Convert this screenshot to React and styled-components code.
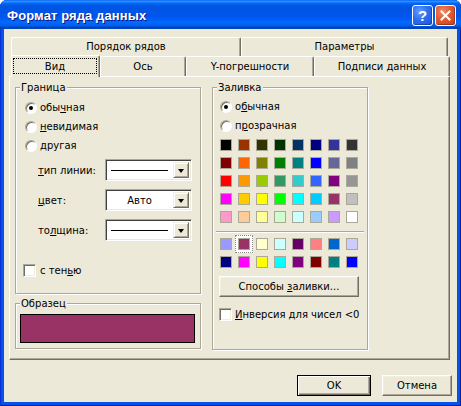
import styled, { createGlobalStyle } from "styled-components";

const GlobalStyle = createGlobalStyle`
  html, body {
    margin: 0;
    padding: 0;
    background: #ffffff;
  }
  body {
    font-family: "DejaVu Sans", Verdana, sans-serif;
    font-size: 10px;
    color: #000;
  }
  u {
    text-decoration-thickness: 1px;
    text-underline-offset: 1px;
  }
`;

const basicColors = [
  "#000000", "#993300", "#333300", "#003300", "#003366", "#000080", "#333399", "#333333",
  "#800000", "#FF6600", "#808000", "#008000", "#008080", "#0000FF", "#666699", "#808080",
  "#FF0000", "#FF9900", "#99CC00", "#339966", "#33CCCC", "#3366FF", "#800080", "#969696",
  "#FF00FF", "#FFCC00", "#FFFF00", "#00FF00", "#00FFFF", "#00CCFF", "#993366", "#C0C0C0",
  "#FF99CC", "#FFCC99", "#FFFF99", "#CCFFCC", "#CCFFFF", "#99CCFF", "#CC99FF", "#FFFFFF",
];

const chartColors = [
  "#9999FF", "#993366", "#FFFFCC", "#CCFFFF", "#660066", "#FF8080", "#0066CC", "#CCCCFF",
  "#000080", "#FF00FF", "#FFFF00", "#00FFFF", "#800080", "#800000", "#008080", "#0000FF",
];

const Window = styled.div`
  width: 461px;
  height: 406px;
  box-sizing: border-box;
  display: flex;
  flex-direction: column;
  background: #0553e4;
  border-radius: 7px 7px 0 0;
  box-shadow: inset 1px 0 #0831d9, inset -1px 0 #001ea0, inset 0 -1px #001ea0;
  overflow: hidden;
`;

const TitleBar = styled.div`
  height: 29px;
  flex: none;
  display: flex;
  align-items: center;
  padding: 2px 5px 0 7px;
  box-sizing: border-box;
  background: linear-gradient(
    to bottom,
    #0058ee 0%,
    #3593ff 4%,
    #288eff 6%,
    #127dff 8%,
    #036ffc 10%,
    #0262ee 14%,
    #0057e5 20%,
    #0054e3 24%,
    #0055eb 56%,
    #005bf5 66%,
    #026afe 76%,
    #0062ef 86%,
    #0052d6 92%,
    #0040ab 94%,
    #0046c0 100%
  );
`;

const Title = styled.span`
  flex: 1;
  color: #fff;
  font-family: "Liberation Sans", Arial, sans-serif;
  font-weight: bold;
  font-size: 13px;
  text-shadow: 1px 1px #0a1883;
  letter-spacing: 0.1px;
`;

const CaptionButtons = styled.div`
  display: flex;
  gap: 2px;
  margin-top: -1px;
`;

const CaptionButton = styled.div`
  width: 21px;
  height: 21px;
  box-sizing: border-box;
  border: 1px solid #fff;
  border-radius: 3px;
  display: flex;
  align-items: center;
  justify-content: center;
  color: #fff;
  font-family: "Liberation Sans", Arial, sans-serif;
  font-weight: bold;
  font-size: 15px;
  background: ${(p) =>
    p.$close
      ? "radial-gradient(circle at 35% 30%, #f08a6a 0%, #e05a30 45%, #c4401c 100%)"
      : "radial-gradient(circle at 35% 30%, #6a9cff 0%, #2d6ff0 45%, #1a56d8 100%)"};
  box-shadow: inset -1px -1px rgba(0, 0, 0, 0.25);
`;

const Content = styled.div`
  flex: 1;
  margin: 0 4px 4px 4px;
  background: #ece9d8;
  padding: 8px 5px 0 5px;
  display: flex;
  flex-direction: column;
`;

const TabArea = styled.div`
  margin-right: 2px;
  display: flex;
  flex-direction: column;
`;

const TabRow = styled.div`
  display: flex;
  align-items: flex-end;
  height: ${(p) => p.$h}px;
  margin-left: 2px;
`;

const Tab = styled.div`
  position: relative;
  width: ${(p) => p.$w}px;
  height: ${(p) => (p.$active ? p.$h + 2 : p.$h)}px;
  margin-bottom: ${(p) => (p.$active ? -1 : 0)}px;
  z-index: ${(p) => (p.$active ? 1 : 0)};
  box-sizing: border-box;
  display: flex;
  align-items: center;
  justify-content: center;
  background: #ece9d8;
  border-top: 1px solid #fff;
  border-left: 1px solid #fff;
  border-right: 1px solid #716f64;
  border-radius: 2px 2px 0 0;
  box-shadow: inset -1px 0 #aca899;
  padding: ${(p) => (p.$active ? "2px 2px 3px 1px" : "0 0 1px")};
`;

const FocusRect = styled.span`
  flex: 1;
  align-self: stretch;
  display: flex;
  align-items: center;
  justify-content: center;
  border: 1px dotted #000;
`;

const Panel = styled.div`
  height: 284px;
  box-sizing: border-box;
  border-top: 1px solid #fff;
  border-left: 1px solid #fff;
  border-right: 1px solid #716f64;
  border-bottom: 1px solid #716f64;
  box-shadow: inset -1px -1px #aca899;
  display: flex;
  gap: 11px;
  padding: 10px 0 0 5px;
`;

const Column = styled.div`
  width: ${(p) => p.$w}px;
  display: flex;
  flex-direction: column;
  gap: 9px;
`;

const Group = styled.div`
  position: relative;
  height: ${(p) => (p.$h ? `${p.$h}px` : "auto")};
  box-sizing: border-box;
  border: 1px solid #aca899;
  box-shadow: inset 1px 1px #fff, 1px 1px #fff;
  padding: ${(p) => p.$pad || "0"};
  display: flex;
  flex-direction: column;
`;

const GroupLabel = styled.span`
  position: absolute;
  top: -7px;
  left: 4px;
  padding: 0 1px;
  line-height: 13px;
  background: #ece9d8;
`;

const OptionRow = styled.div`
  display: flex;
  align-items: center;
  height: 19px;
  padding-left: ${(p) => p.$indent}px;
  gap: 3px;
`;

const Radio = styled.span`
  position: relative;
  width: 12px;
  height: 12px;
  box-sizing: border-box;
  border-radius: 50%;
  background: #fff;
  border: 1px solid;
  border-color: #aca899 #fff #fff #aca899;
  box-shadow: inset 1px 1px #716f64;

  &::after {
    content: "";
    display: ${(p) => (p.$checked ? "block" : "none")};
    position: absolute;
    left: 3px;
    top: 3px;
    width: 4px;
    height: 4px;
    border-radius: 50%;
    background: #000;
  }
`;

const Checkbox = styled.span`
  width: 13px;
  height: 13px;
  box-sizing: border-box;
  background: #fff;
  border: 1px solid;
  border-color: #aca899 #fff #fff #aca899;
  box-shadow: inset 1px 1px #716f64, inset -1px -1px #f1efe2;
`;

const CheckRow = styled.div`
  display: flex;
  align-items: center;
  gap: ${(p) => p.$gap}px;
  padding-left: ${(p) => p.$indent}px;
  margin-top: ${(p) => p.$top}px;
`;

const Fields = styled.div`
  display: flex;
  flex-direction: column;
  gap: 8px;
  margin-top: 4px;
`;

const FieldRow = styled.div`
  display: flex;
  align-items: center;
  height: 22px;
  padding-left: 22px;
`;

const FieldLabel = styled.span`
  width: 67px;
`;

const Combo = styled.div`
  width: 87px;
  height: 22px;
  box-sizing: border-box;
  display: flex;
  align-items: stretch;
  background: #fff;
  border: 1px solid;
  border-color: #aca899 #fff #fff #aca899;
  box-shadow: inset 1px 1px #404040, inset -1px -1px #ece9d8;
  padding: 2px;
`;

const ComboValue = styled.div`
  flex: 1;
  display: flex;
  align-items: center;
  justify-content: center;
  padding-right: 2px;
`;

const LineSample = styled.span`
  width: 57px;
  height: 1px;
  background: #000;
`;

const ComboButton = styled.div`
  width: 16px;
  box-sizing: border-box;
  display: flex;
  align-items: center;
  justify-content: center;
  background: #ece9d8;
  border: 1px solid;
  border-color: #f1efe2 #716f64 #716f64 #f1efe2;
  box-shadow: inset 1px 1px #fff, inset -1px -1px #aca899;

  &::after {
    content: "";
    width: 0;
    height: 0;
    border-left: 3.5px solid transparent;
    border-right: 3.5px solid transparent;
    border-top: 4px solid #000;
    margin-top: 1px;
  }
`;

const Palette = styled.div`
  display: grid;
  grid-template-columns: repeat(8, 12px);
  gap: 6px;
  padding-left: 7px;
  margin-top: ${(p) => p.$top}px;
`;

const Swatch = styled.span`
  width: 12px;
  height: 12px;
  box-sizing: border-box;
  border: 1px solid #aca899;
  background: ${(p) => p.$color};
  ${(p) =>
    p.$selected &&
    `
    outline: 1px dotted #8a8a8a;
    outline-offset: 2px;
    box-shadow: 0 0 0 3px #fff;
  `}
`;

const Separator = styled.div`
  height: 1px;
  margin: 8px 3px 0;
  background: #aca899;
  box-shadow: 0 1px #fff;
`;

const Button = styled.div`
  width: ${(p) => p.$w}px;
  height: ${(p) => p.$h || 21}px;
  box-sizing: border-box;
  display: flex;
  align-items: center;
  justify-content: center;
  background: #ece9d8;
  border: 1px solid;
  border-color: ${(p) =>
    p.$default ? "#000" : "#fff #716f64 #716f64 #fff"};
  box-shadow: ${(p) =>
    p.$default
      ? "inset 1px 1px #fff, inset -1px -1px #716f64, inset -2px -2px #aca899"
      : "inset -1px -1px #aca899, inset 1px 1px #f1efe2"};
  margin-left: ${(p) => p.$left || 0}px;
  margin-top: ${(p) => p.$top || 0}px;
`;

const SamplePreview = styled.div`
  height: 29px;
  box-sizing: border-box;
  background: #993366;
  border: 1px solid #000;
`;

const Footer = styled.div`
  display: flex;
  justify-content: flex-end;
  gap: 11px;
  padding-top: 15px;
`;

function CloseGlyph() {
  return (
    <svg width="11" height="11" viewBox="0 0 11 11">
      <path d="M1.5 1.5 L9.5 9.5 M9.5 1.5 L1.5 9.5" stroke="#fff" strokeWidth="2" strokeLinecap="square" />
    </svg>
  );
}

export default function App() {
  return (
    <>
      <GlobalStyle />
      <Window>
        <TitleBar>
          <Title>Формат ряда данных</Title>
          <CaptionButtons>
            <CaptionButton>?</CaptionButton>
            <CaptionButton $close>
              <CloseGlyph />
            </CaptionButton>
          </CaptionButtons>
        </TitleBar>

        <Content>
          <TabArea>
            <TabRow $h={19}>
              <Tab $w={230} $h={19}>Порядок рядов</Tab>
              <Tab $w={207} $h={19}>Параметры</Tab>
            </TabRow>
            <TabRow $h={20}>
              <Tab $w={89} $h={20} $active>
                <FocusRect>Вид</FocusRect>
              </Tab>
              <Tab $w={86} $h={20}>Ось</Tab>
              <Tab $w={128} $h={20}>Y-погрешности</Tab>
              <Tab $w={136} $h={20}>Подписи данных</Tab>
            </TabRow>

            <Panel>
              <Column $w={186}>
                <Group $h={207} $pad="10px 0 0 0">
                  <GroupLabel>Граница</GroupLabel>
                  <OptionRow $indent={9}>
                    <Radio $checked />
                    <span>
                      обы<u>ч</u>ная
                    </span>
                  </OptionRow>
                  <OptionRow $indent={9}>
                    <Radio />
                    <span>
                      <u>н</u>евидимая
                    </span>
                  </OptionRow>
                  <OptionRow $indent={9}>
                    <Radio />
                    <span>другая</span>
                  </OptionRow>

                  <Fields>
                    <FieldRow>
                      <FieldLabel>
                        <u>т</u>ип линии:
                      </FieldLabel>
                      <Combo>
                        <ComboValue>
                          <LineSample />
                        </ComboValue>
                        <ComboButton />
                      </Combo>
                    </FieldRow>
                    <FieldRow>
                      <FieldLabel>
                        <u>ц</u>вет:
                      </FieldLabel>
                      <Combo>
                        <ComboValue>Авто</ComboValue>
                        <ComboButton />
                      </Combo>
                    </FieldRow>
                    <FieldRow>
                      <FieldLabel>
                        то<u>л</u>щина:
                      </FieldLabel>
                      <Combo>
                        <ComboValue>
                          <LineSample />
                        </ComboValue>
                        <ComboButton />
                      </Combo>
                    </FieldRow>
                  </Fields>

                  <CheckRow $indent={7} $gap={4} $top={23}>
                    <Checkbox />
                    <span>
                      с тен<u>ь</u>ю
                    </span>
                  </CheckRow>
                </Group>

                <Group $pad="10px 5px 5px 4px">
                  <GroupLabel>Образец</GroupLabel>
                  <SamplePreview />
                </Group>
              </Column>

              <Column $w={156}>
                <Group $h={263} $pad="9px 0 0 0">
                  <GroupLabel>Заливка</GroupLabel>
                  <OptionRow $indent={7}>
                    <Radio $checked />
                    <span>
                      о<u>б</u>ычная
                    </span>
                  </OptionRow>
                  <OptionRow $indent={7}>
                    <Radio />
                    <span>
                      п<u>р</u>озрачная
                    </span>
                  </OptionRow>

                  <Palette $top={4}>
                    {basicColors.map((c, i) => (
                      <Swatch key={i} $color={c} />
                    ))}
                  </Palette>
                  <Separator />
                  <Palette $top={6}>
                    {chartColors.map((c, i) => (
                      <Swatch key={i} $color={c} $selected={i === 1} />
                    ))}
                  </Palette>

                  <Button $w={140} $left={6} $top={8}>
                    <span>
                      Способы <u>з</u>аливки...
                    </span>
                  </Button>

                  <CheckRow $indent={6} $gap={3} $top={11}>
                    <Checkbox />
                    <span>
                      <u>И</u>нверсия для чисел &lt;0
                    </span>
                  </CheckRow>
                </Group>
              </Column>
            </Panel>
          </TabArea>

          <Footer>
            <Button $w={74} $default>
              OK
            </Button>
            <Button $w={70}>Отмена</Button>
          </Footer>
        </Content>
      </Window>
    </>
  );
}
